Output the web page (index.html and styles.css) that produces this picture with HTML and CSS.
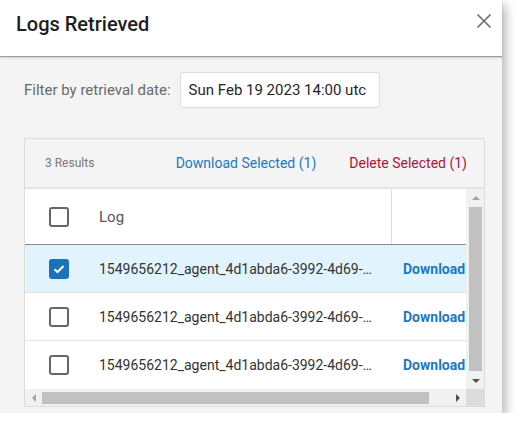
FILE: index.html
```html
<!DOCTYPE html>
<html lang="en">
<head>
    <meta charset="UTF-8">
    <meta name="viewport" content="width=device-width, initial-scale=1.0">
    <title>Logs Retrieved</title>
    <link rel="stylesheet" href="styles.css">
</head>
<body>
    <div class="dialog">
        <div class="dialog-header">
            <h2>Logs Retrieved</h2>
            <button class="close" aria-label="Close">
                <svg width="16" height="16" viewBox="0 0 16 16"><path d="M1.5 1.5 L14.5 14.5 M14.5 1.5 L1.5 14.5" stroke="#6b6b6b" stroke-width="1.6" fill="none"/></svg>
            </button>
        </div>

        <div class="dialog-body">
            <div class="filter">
                <label for="date">Filter by retrieval date:</label>
                <input type="text" id="date" value="Sun Feb 19 2023 14:00 utc">
            </div>

            <div class="grid">
                <div class="toolbar">
                    <span class="count">3 Results</span>
                    <div class="actions">
                        <a class="download-all">Download Selected (1)</a>
                        <a class="delete-all">Delete Selected (1)</a>
                    </div>
                </div>

                <div class="grid-frame">
                    <div class="viewport">
                        <div class="table">
                            <div class="row head">
                                <div class="cell check"><span class="box"></span></div>
                                <div class="cell name">Log</div>
                                <div class="cell action"></div>
                            </div>
                            <div class="row selected">
                                <div class="cell check">
                                    <span class="box on">
                                        <svg width="12" height="10" viewBox="0 0 12 10"><path d="M1.5 5.2 L4.5 8 L10.5 2" stroke="#fff" stroke-width="2" fill="none"/></svg>
                                    </span>
                                </div>
                                <div class="cell name">1549656212_agent_4d1abda6-3992-4d69-…</div>
                                <div class="cell action"><a>Download</a></div>
                            </div>
                            <div class="row">
                                <div class="cell check"><span class="box"></span></div>
                                <div class="cell name">1549656212_agent_4d1abda6-3992-4d69-…</div>
                                <div class="cell action"><a>Download</a></div>
                            </div>
                            <div class="row">
                                <div class="cell check"><span class="box"></span></div>
                                <div class="cell name">1549656212_agent_4d1abda6-3992-4d69-…</div>
                                <div class="cell action"><a>Download</a></div>
                            </div>
                        </div>
                    </div>

                    <!-- fake scrollbars -->
                    <div class="vscroll">
                        <span class="arrow up"></span>
                        <span class="thumb"></span>
                        <span class="arrow down"></span>
                    </div>
                    <div class="hscroll">
                        <span class="arrow left"></span>
                        <span class="thumb"></span>
                        <span class="arrow right"></span>
                    </div>
                    <div class="corner"></div>
                </div>
            </div>
        </div>
    </div>
</body>
</html>
```

FILE: styles.css
```css
body {
    margin: 0;
    font-family: Roboto, "Liberation Sans", Arial, sans-serif;
    background: #fff;
}
.dialog {
    width: 502px;
    background: #f4f4f4;
    box-shadow: 4px 5px 10px rgba(0, 0, 0, 0.28);
    padding-bottom: 6px;
}
.dialog-header {
    height: 56px;
    background: #fff;
    border-bottom: 1px solid #9a9a9a;
    box-shadow: 0 1px 2px rgba(0, 0, 0, 0.15);
    display: flex;
    align-items: center;
    justify-content: space-between;
    padding: 0 10px 0 16px;
}
.dialog-header h2 {
    margin: 0 0 8px;
    font-size: 20px;
    font-weight: 500;
    color: #1e1e1e;
}
.close {
    border: none;
    background: none;
    padding: 0;
    width: 16px;
    height: 16px;
    margin: 0 0 14px;
    cursor: pointer;
}
.dialog-body {
    padding: 15px 18px 0 24px;
}
.filter {
    display: flex;
    align-items: center;
    gap: 9px;
}
.filter label {
    font-size: 15px;
    color: #6a6a6a;
}
.filter input {
    width: 200px;
    height: 36px;
    box-sizing: border-box;
    border: 1px solid #dcdcdc;
    border-radius: 2px;
    padding: 0 8px;
    font-family: inherit;
    font-size: 15px;
    color: #1f1f2e;
    background: #fff;
}
.grid {
    margin-top: 30px;
    border: 1px solid #dcdcdc;
    width: 459px;
}
.toolbar {
    height: 48px;
    border-bottom: 2px solid #e4e4e4;
    display: flex;
    align-items: center;
    padding: 0 17px 0 20px;
}
.count {
    font-size: 12px;
    color: #777;
}
.actions {
    margin-left: auto;
    display: flex;
    gap: 33px;
    font-size: 14px;
}
.download-all {
    color: #1b79c4;
}
.delete-all {
    color: #a9153f;
}
.grid-frame {
    display: grid;
    grid-template-columns: 441px 18px;
    grid-template-rows: 200px 17px;
}
.viewport {
    overflow: hidden;
    background: #fff;
}
.table {
    width: 520px;
}
.row {
    display: flex;
    height: 47px;
    border-bottom: 1px solid #e2e2e2;
}
.row.head {
    height: 55px;
    border-bottom-color: #8a8a8a;
}
.row.selected {
    background: #e1f3fc;
}
.row:last-child {
    border-bottom: none;
}
.cell {
    display: flex;
    align-items: center;
}
.check {
    width: 74px;
    padding-left: 24px;
    box-sizing: border-box;
}
.name {
    width: 292px;
    font-size: 14px;
    color: #333;
    white-space: nowrap;
}
.head .name {
    font-size: 15px;
    color: #555;
    border-right: 1px solid #dedede;
}
.action {
    padding-left: 12px;
}
.action a {
    font-size: 14px;
    font-weight: 700;
    color: #1b79c4;
}
.box {
    width: 20px;
    height: 20px;
    box-sizing: border-box;
    border: 2px solid #666;
    border-radius: 3px;
    display: flex;
    align-items: center;
    justify-content: center;
}
.box.on {
    background: #1a72bd;
    border-color: #1a72bd;
}
.vscroll {
    background: #f1f1f1;
    display: flex;
    flex-direction: column;
    align-items: center;
    padding-left: 1px;
}
.vscroll .thumb {
    flex: 1;
    width: 13px;
    background: #c1c1c1;
    margin: 1px 0;
}
.vscroll .arrow,
.hscroll .arrow {
    flex: 0 0 17px;
    display: flex;
    align-items: center;
    justify-content: center;
}
.arrow::after {
    content: "";
    border: 4px solid transparent;
}
.arrow.up::after {
    border-bottom-color: #a3a3a3;
    border-top-width: 0;
}
.arrow.down::after {
    border-top-color: #505050;
    border-bottom-width: 0;
}
.arrow.left::after {
    border-right-color: #a3a3a3;
    border-left-width: 0;
}
.arrow.right::after {
    border-left-color: #505050;
    border-right-width: 0;
}
.hscroll {
    background: #f1f1f1;
    display: flex;
    align-items: center;
}
.hscroll .thumb {
    width: 387px;
    height: 12px;
    background: #c1c1c1;
}
.hscroll .arrow.right {
    margin-left: auto;
}
.corner {
    background: #dcdcdc;
}
```
